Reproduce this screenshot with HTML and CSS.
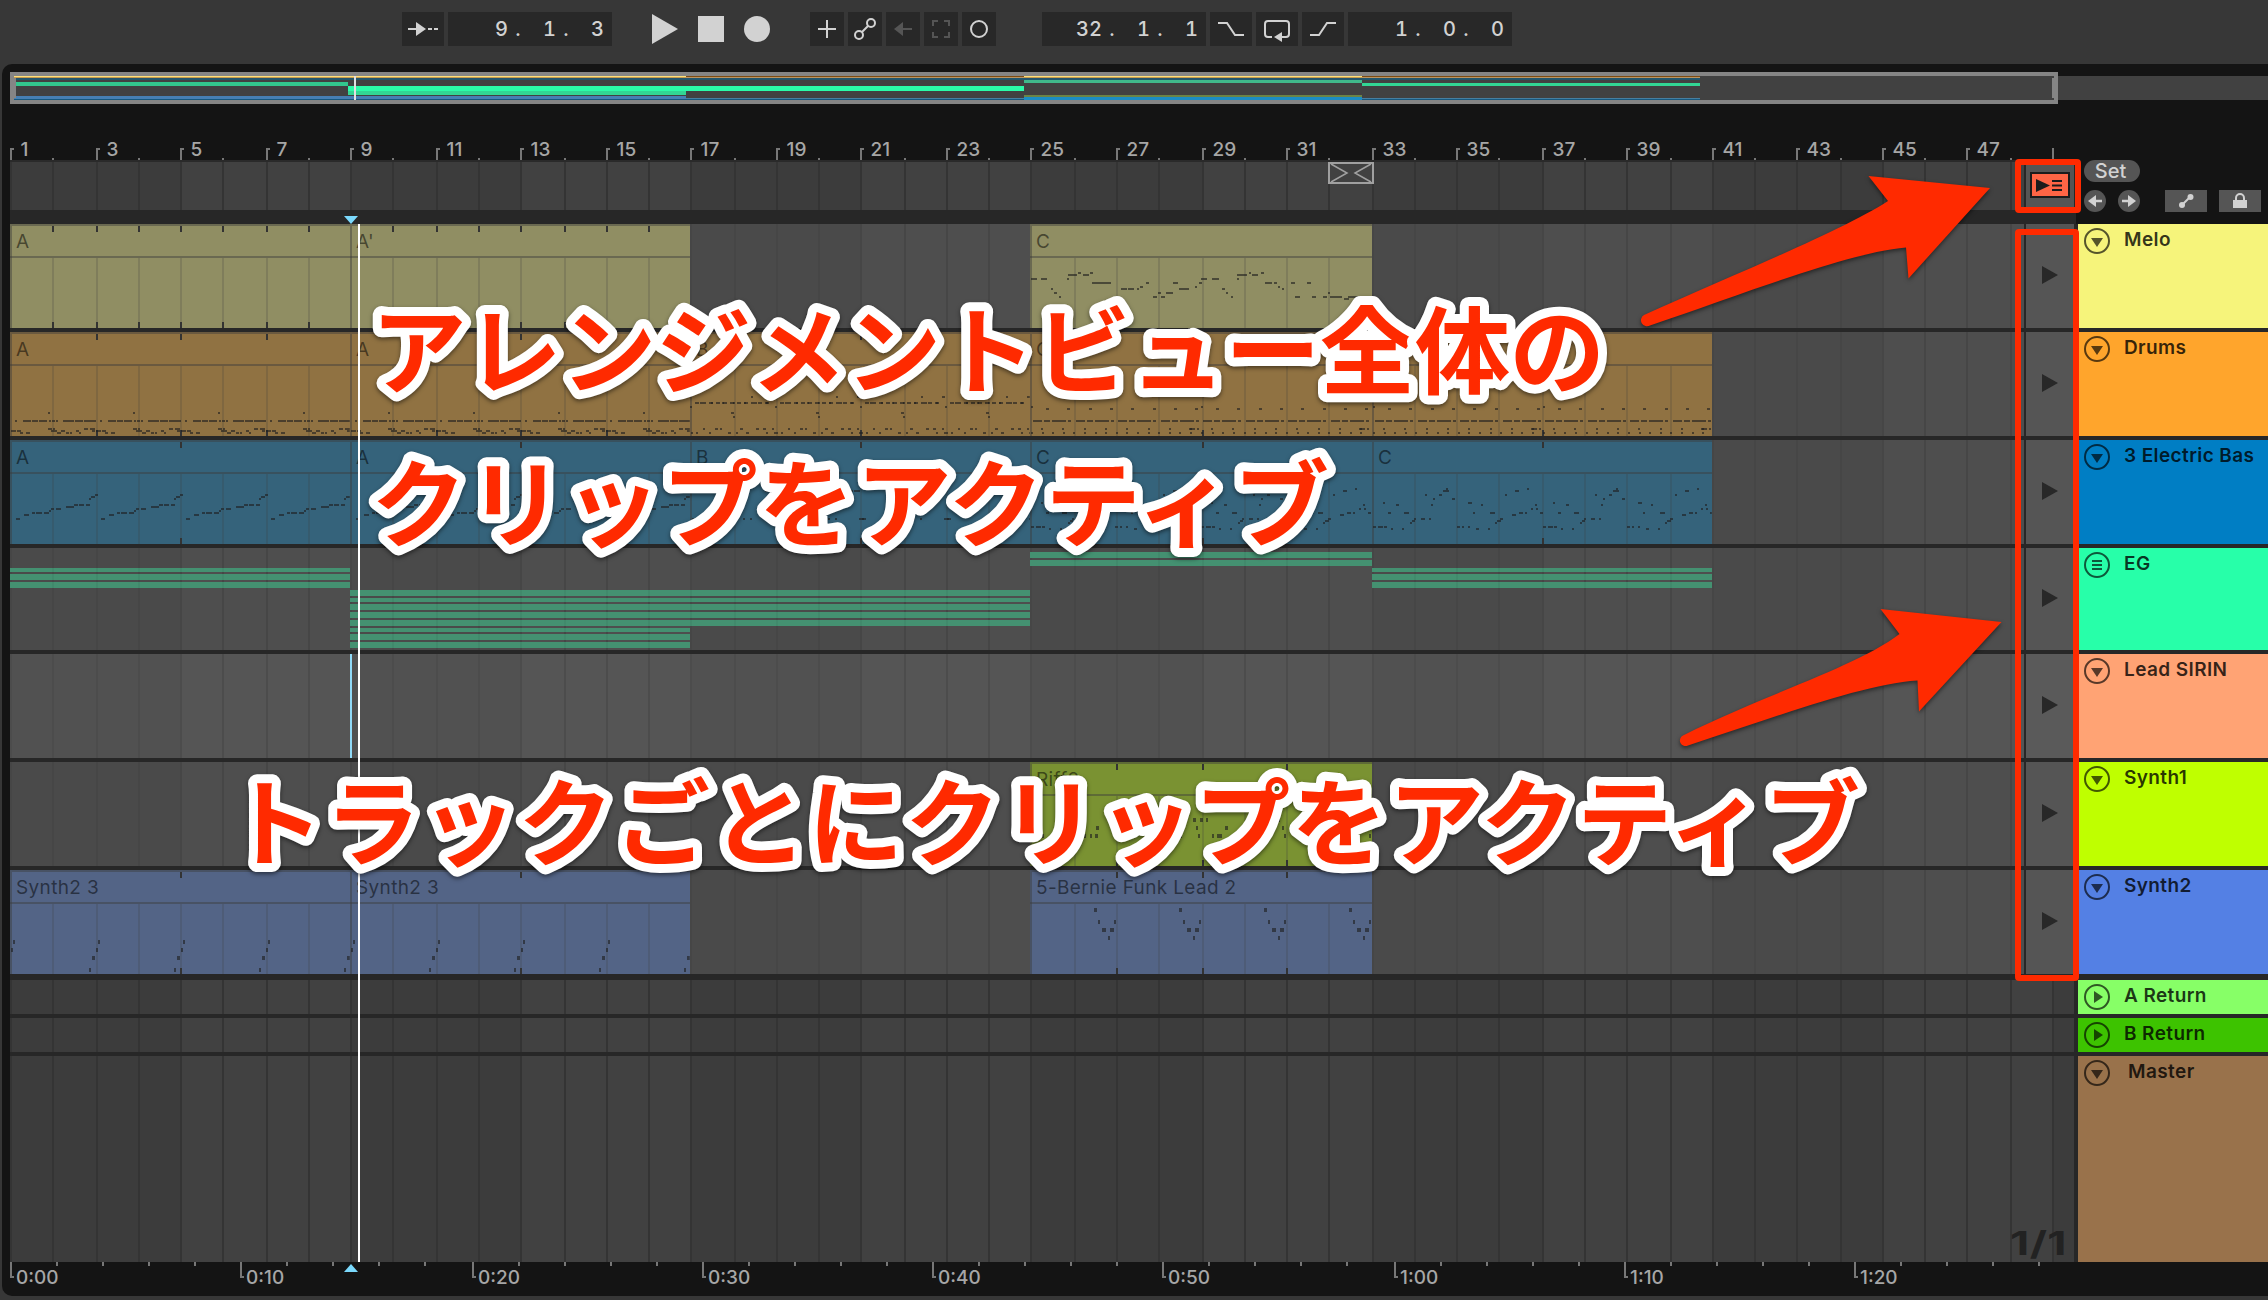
FILE: index.html
```html
<!DOCTYPE html>
<html lang="ja">
<head>
    <meta charset="UTF-8" />
    <title>Arrangement</title>
    <link rel="stylesheet" href="styles.css">
</head>
<body>
<header class="transport">
    <div class="box btn">
        <svg width="42" height="34"><path d="M6 17h9M26 17h4M32 17h4" stroke="#d2d2d2" stroke-width="2"/><path d="M14 10l10 7-10 7z" fill="#d2d2d2"/></svg>
    </div>
    <div class="box field"><b>9</b><i>.</i><b>1</b><i>.</i><b>3</b></div>
    <div class="play-group">
        <svg width="26" height="30"><path d="M0 0l26 15L0 30z" fill="#d2d2d2"/></svg>
        <div class="stop"></div>
        <div class="record"></div>
    </div>
    <div class="box tool"><svg width="34" height="34"><path d="M8 17h18M17 8v18" stroke="#d2d2d2" stroke-width="2"/></svg></div>
    <div class="box tool"><svg width="34" height="34" fill="none" stroke="#d2d2d2" stroke-width="2"><circle cx="11" cy="23" r="4"/><circle cx="23" cy="11" r="4"/><path d="M14 20l6-6"/></svg></div>
    <div class="box tool"><svg width="34" height="34"><path d="M15 17h11" stroke="#555" stroke-width="2"/><path d="M17 10v14l-9-7z" fill="#555"/></svg></div>
    <div class="box tool"><svg width="34" height="34"><path d="M9 14V9h5M20 9h5v5M25 20v5h-5M14 25H9v-5" fill="none" stroke="#555" stroke-width="2"/></svg></div>
    <div class="box tool"><svg width="34" height="34"><circle cx="17" cy="17" r="8" fill="none" stroke="#d2d2d2" stroke-width="2"/></svg></div>
    <div class="box field loop-start"><b>32</b><i>.</i><b>1</b><i>.</i><b>1</b></div>
    <div class="box btn"><svg width="42" height="34"><path d="M8 11h9l8 12h9" fill="none" stroke="#d2d2d2" stroke-width="2"/></svg></div>
    <div class="box btn"><svg width="42" height="34"><path d="M16 25h-4a3 3 0 0 1-3-3V12a3 3 0 0 1 3-3h18a3 3 0 0 1 3 3v10a3 3 0 0 1-3 3h-5" fill="none" stroke="#d2d2d2" stroke-width="2"/><path d="M26 20v10l-8-5z" fill="#d2d2d2"/></svg></div>
    <div class="box btn"><svg width="42" height="34"><path d="M8 23h9l8-12h9" fill="none" stroke="#d2d2d2" stroke-width="2"/></svg></div>
    <div class="box field"><b>1</b><i>.</i><b>0</b><i>.</i><b>0</b></div>
</header>

<main class="arranger">
    <div class="overview"><svg id="overview" width="2258" height="32"></svg></div>
    <svg id="ruler" class="ruler" width="2064" height="56"></svg>

    <div class="scrub-row">
        <div class="scrub">
            <svg id="scrub" width="2014" height="48"></svg>
            <div class="back-cell">
                <div class="back-btn"><svg width="36" height="22"><path d="M4 5l14 6.500-14 6.500z" fill="#1c1c1c"/><path d="M20 7h10M20 11.500h10M20 16h10" stroke="#1c1c1c" stroke-width="2"/></svg></div>
            </div>
        </div>
        <div class="set-tools">
            <div class="set">Set</div>
            <div class="set-buttons">
                <svg width="22" height="22"><circle cx="11" cy="11" r="11" fill="#555"/><path d="M10 11h8" stroke="#d2d2d2" stroke-width="2.500"/><path d="M12 5v12l-8-6z" fill="#d2d2d2"/></svg>
                <svg width="22" height="22"><circle cx="11" cy="11" r="11" fill="#555"/><path d="M4 11h8" stroke="#d2d2d2" stroke-width="2.500"/><path d="M10 5v12l8-6z" fill="#d2d2d2"/></svg>
                <div class="small-btn auto"><svg width="42" height="22"><path d="M17 15l8-8" stroke="#d2d2d2" stroke-width="2"/><circle cx="17" cy="15" r="3" fill="#d2d2d2"/><circle cx="25.500" cy="7" r="3" fill="#d2d2d2"/></svg></div>
                <div class="small-btn"><svg width="42" height="22"><path d="M14 10h14v8H14z" fill="#d2d2d2"/><path d="M17 10V8a4 4 0 0 1 8 0v2" fill="none" stroke="#d2d2d2" stroke-width="2"/></svg></div>
            </div>
        </div>
    </div>

    <div id="tracks" class="tracks"></div>
    <svg id="time" class="time" width="2064" height="34"></svg>
</main>

<div class="marker top"></div>
<div class="marker bottom"></div>
<div class="playhead"></div>

<svg class="notes-layer" width="2268" height="1300">
    <g class="shape">
        <path d="M1644 315C1730 276 1840 232 1888 201L1868.500 176 1990 188 1908.500 278.500 1906 247.500C1850 252 1740 295 1650 325.500A5.500 5.500 0 0 1 1644 315z"/>
        <path d="M1683 735.500C1766 694 1856 667 1899.500 634L1880.500 609 2001.500 622 1919 711.500 1917.500 680.500C1862 684 1770 719 1688 745.500A5.500 5.500 0 0 1 1683 735.500z"/>
    </g>
    <g class="frame">
        <rect x="2018" y="162" width="60" height="48" rx="1"/>
        <rect x="2018" y="232" width="58" height="746" rx="1"/>
    </g>
    <g class="caption">
        <text x="371" y="387" textLength="1234">アレンジメントビュー全体の</text>
        <text x="371" y="540" textLength="958">クリップをアクティブ</text>
        <text x="228" y="859" textLength="1632">トラックごとにクリップをアクティブ</text>
    </g>
</svg>
<script src="script.js"></script>
</body>
</html>
```
FILE: styles.css
```css
* {
    box-sizing: border-box;
}

body {
    margin: 0;
    width: 2268px;
    height: 1300px;
    overflow: hidden;
    position: relative;
    background: #373737;
    color: #d2d2d2;
    font-family: Inter, "Noto Sans CJK JP", sans-serif;
    font-size: 19px;
}

svg {
    display: block;
}

/* transport bar */
.transport {
    height: 64px;
    padding: 12px 0 0 402px;
    display: flex;
    gap: 4px;
}

.box {
    height: 34px;
    background: #282828;
}

.btn {
    width: 42px;
}

.tool {
    width: 34px;
}

.field {
    width: 164px;
    padding-right: 8px;
    display: flex;
    justify-content: flex-end;
    align-items: center;
    font-size: 20px;
    font-weight: 500;
    font-variant-numeric: tabular-nums;
}

.field b {
    width: 28px;
    text-align: right;
    font-weight: 500;
}

.field i {
    width: 20px;
    text-align: center;
    font-style: normal;
}

.loop-start {
    margin-left: 42px;
}

.play-group {
    display: flex;
    align-items: center;
    gap: 20px;
    height: 34px;
    margin: 0 36px;
}

.stop,
.record {
    width: 26px;
    height: 26px;
    background: #d2d2d2;
}

.record {
    border-radius: 50%;
}

/* arrangement */
.arranger {
    height: 1232px;
    margin-left: 2px;
    padding: 8px 0 0 8px;
    background: #141414;
    border-radius: 10px 0 0 10px;
}

.ruler,
.time {
    overflow: visible;
}

.ruler text,
.time text {
    fill: #a6a6a6;
    font-size: 19px;
    font-weight: 500;
}

.scrub-row {
    display: flex;
    height: 64px;
}

.scrub {
    width: 2066px;
    border-top: 2px solid #2a2a2a;
    border-bottom: 14px solid #272727;
    background: #272727;
    display: flex;
}

.back-cell {
    width: 50px;
    border-left: 2px solid #272727;
    background: #555;
    padding: 10px 4px;
}

.back-btn {
    width: 40px;
    height: 26px;
    border: 2px solid #1c1c1c;
    background: #ff6545;
}

.set-tools {
    padding-left: 8px;
}

.set {
    width: 56px;
    height: 22px;
    padding-right: 3px;
    border-radius: 11px;
    background: #555;
    font-size: 20px;
    font-weight: 500;
    line-height: 23px;
    text-align: center;
}

.set-buttons {
    display: flex;
    align-items: center;
    gap: 12px;
    margin-top: 8px;
}

.small-btn {
    width: 42px;
    height: 22px;
    background: #555;
}

.small-btn.auto {
    margin-left: 13px;
}

.tracks {
    background: #272727;
    display: flex;
    flex-direction: column;
    gap: 4px;
    height: 1038px;
}

.track {
    display: flex;
}

.track.after-gap {
    margin-top: 2px;
}

.launch {
    width: 50px;
    border-left: 2px solid #272727;
    background: #555;
    display: flex;
    align-items: center;
    padding: 0 0 2px 16px;
}

.launch.selected {
    background: #5a5a5a;
}

.head {
    flex: 1;
    margin-left: 4px;
    padding: 4px 0 0 6px;
    display: flex;
    align-items: flex-start;
    color: rgba(0, 0, 0, 0.8);
    font-weight: 600;
    letter-spacing: 0.4px;
    white-space: nowrap;
    overflow: hidden;
}

.name {
    margin: 2px 0 0 14px;
    line-height: 20px;
}

.head.master .name {
    margin-left: 18px;
}

.lane text {
    font-size: 19px;
    letter-spacing: 0.35px;
    fill: #000;
    fill-opacity: 0.52;
}

.lane .position {
    font-size: 33px;
    font-weight: 700;
    fill: #222;
    fill-opacity: 1;
}

.marker {
    position: absolute;
    left: 344px;
    width: 14px;
    height: 8px;
    background: #7bd9fc;
}

.marker.top {
    top: 216px;
    clip-path: polygon(0 0, 100% 0, 50% 100%);
}

.marker.bottom {
    top: 1264px;
    clip-path: polygon(50% 0, 100% 100%, 0 100%);
}

.playhead {
    position: absolute;
    left: 358px;
    top: 224px;
    width: 2px;
    height: 1038px;
    background: #fff;
}

/* red annotations over the window */
.notes-layer {
    position: absolute;
    left: 0;
    top: 0;
}

.shape {
    fill: #ff2a00;
    filter: drop-shadow(0 2px 2px rgba(0, 0, 0, 0.5));
}

.frame rect {
    fill: none;
    stroke: #ff2a00;
    stroke-width: 6;
}

.caption text {
    font-family: "Noto Sans CJK JP", sans-serif;
    font-size: 95.5px;
    font-weight: 700;
    fill: #ff2a00;
    stroke: #fff;
    stroke-width: 18px;
    stroke-linejoin: round;
    paint-order: stroke;
}

.caption {
    filter: drop-shadow(0 2px 2px rgba(0, 0, 0, 0.5));
}
```
FILE: script.js
```js
// x of a bar line inside a lane, snapped to 2px
function barX(bar) {
    return 2 * Math.round((bar - 1) * 21.27);
}

function rect(x, y, w, h, fill) {
    return `<rect x="${x}" y="${y}" width="${w}" height="${h}" fill="${fill}"/>`;
}

function grid(width, height, dark, light, line) {
    let s = "";
    for (let b = 1; b < 50; b += 4) {
        s += rect(barX(b), 0, barX(b + 4) - barX(b), height, (b - 1) % 8 ? light : dark);
    }
    for (let b = 1; b < 50; b++) s += rect(barX(b), 0, 2, height, line);
    return s;
}

// rows: { y: [[x, width], ...] }, repeated every `period` px
function notes(clip, rows, period, h = 2) {
    const left = barX(clip.from), right = barX(clip.to);
    let s = "";
    for (let off = left; off < right - 2; off += period) {
        for (const y in rows) {
            for (const [x, w] of rows[y]) {
                if (off + x < right) s += rect(Math.round(off + x), y, Math.min(w, right - off - x), h, "rgba(30,30,30,.62)");
            }
        }
    }
    return s;
}

const every = (step, start, end, w) => {
    const out = [];
    for (let x = start; x < end; x += step) out.push([x, w]);
    return out;
};

const drumsA = {
    80: [[38, 2]],
    88: [[5, 2], [13, 8], [22, 6], [29, 8], [39, 2], [42, 3], [46, 2], [53, 11], [65, 8], [74, 12]],
    96: [[38, 4], [43, 2], [74, 4], [80, 5]],
    98: [[1, 5], [7, 4], [41, 6], [51, 4], [66, 3], [82, 3]],
    100: [[10, 3], [16, 4], [47, 4], [56, 3], [60, 2], [69, 2]]
};
const drumsB = {
    64: [[61, 2], [82, 3]],
    70: [...every(7, 5, 82, 4), ...every(11, 10, 80, 2)],
    74: [[0, 2]],
    80: [[41, 3]],
    84: [[43, 2]],
    96: [[13, 2], [25, 3], [30, 2], [50, 3], [66, 3], [73, 3], [82, 2]],
    100: [[1, 2], [6, 2], [19, 2], [38, 3], [46, 2], [56, 3], [76, 2], [84, 2]]
};
const drumsC = {
    74: [[1, 2]],
    76: every(21.3, 16, 170, 3),
    88: [...every(42.5, 3, 168, 9), ...every(42.5, 14, 168, 6), ...every(42.5, 22, 168, 14), ...every(42.5, 38, 168, 3)],
    96: [...every(21.3, 11, 170, 2), [159, 6], [167, 2]],
    100: every(10.6, 1, 170, 2)
};
const bassA = {
    78: [[6, 4]], 74: [[14, 5]], 72: [[22, 3], [26, 6], [34, 5]], 70: [[39, 2]],
    68: [[41, 3], [46, 5]], 66: [[56, 8]], 64: [[64, 4], [69, 5], [76, 4]],
    58: [[79, 2]], 56: [[81, 4]], 54: [[85, 3]]
};
const bassB = { 78: [[2, 2], [53, 2], [60, 2], [84, 7]], 50: [[75, 3], [79, 6]], 60: [[30, 4], [36, 3]] };
const bassC = {
    86: [[1, 3], [6, 5], [12, 3], [85, 3], [90, 2], [96, 2]],
    88: [[19, 2], [30, 2], [104, 3], [116, 2]],
    82: [[38, 2], [123, 2]], 80: [[40, 3], [125, 4]],
    78: [[42, 2], [49, 4], [57, 2], [128, 3]],
    74: [[140, 4]],
    72: [[16, 3], [32, 5], [101, 2], [118, 5], [147, 4], [153, 2], [168, 3]],
    68: [[159, 2], [164, 2]],
    64: [[24, 3], [59, 2], [109, 2], [163, 2]],
    62: [[11, 2], [96, 4]], 58: [[61, 2], [80, 3]],
    54: [[53, 2], [67, 3], [133, 2]], 50: [[71, 6], [143, 4]], 48: [[74, 2], [155, 2]]
};
const meloC = {
    48: [[48, 3], [60, 3], [219, 2], [231, 3]],
    50: [[38, 9], [53, 6], [207, 10], [222, 6]],
    54: [[1, 6], [11, 6], [37, 2], [171, 6], [182, 7], [207, 2]],
    58: [[62, 19], [116, 3], [143, 5], [169, 3], [235, 7], [244, 3], [261, 4], [277, 4]],
    62: [[110, 3], [165, 2], [248, 2]],
    64: [[21, 2], [91, 6], [98, 6], [107, 2], [149, 10], [192, 3], [252, 2]],
    68: [[24, 3], [128, 3], [136, 7], [196, 2], [298, 2]],
    72: [[29, 2], [123, 4], [131, 4], [201, 2], [265, 5], [282, 4], [293, 4], [300, 12], [318, 10]],
    74: [[314, 5]]
};
const synthA = { 70: [[3, 2]], 78: [[1, 2]], 86: [[82, 3]], 98: [[79, 2]] };
const synthC = { 38: [[64, 3]], 50: [[68, 2], [84, 2]], 58: [[72, 4], [80, 4]], 66: [[78, 2]] };
const riff = {
    44: [[158, 2]],
    56: [[163, 3], [170, 3], [176, 2], [248, 2]],
    64: [[66, 3], [151, 2], [166, 2], [195, 3], [252, 2]],
    72: [[12, 2], [54, 2], [60, 2], [65, 3], [102, 2], [145, 2], [150, 2], [168, 2], [182, 2], [187, 5], [236, 2], [254, 2], [339, 2]]
};

const PLAY = `<svg width="16" height="18"><path d="M0 0l16 9-16 9z" fill="#282828"/></svg>`;

const tracks = [
    { name: "Melo", h: 104, color: "#f6f47b", clip: "#908e63", clips: [
        { from: 1, to: 9, label: "A", ticks: 1 },
        { from: 9, to: 17, label: "A'", ticks: 1 },
        { from: 25, to: 33, label: "C", rows: meloC, period: 340 }] },
    { name: "Drums", h: 104, color: "#ffa52c", clip: "#907242", clips: [
        { from: 1, to: 9, label: "A", ticks: 2, rows: drumsA, period: 85.08 },
        { from: 9, to: 17, label: "A", ticks: 2, rows: drumsA, period: 85.08 },
        { from: 17, to: 25, label: "B", ticks: 4, rows: drumsB, period: 85.08 },
        { from: 25, to: 33, label: "C", ticks: 4, rows: drumsC, period: 170.16 },
        { from: 33, to: 41, label: "C", ticks: 4, rows: drumsC, period: 170.16 }] },
    { name: "3 Electric Bas", h: 104, color: "#007ec4", clip: "#35637b", clips: [
        { from: 1, to: 9, label: "A", ticks: 4, rows: bassA, period: 85.08 },
        { from: 9, to: 17, label: "A", ticks: 4, rows: bassA, period: 85.08 },
        { from: 17, to: 25, label: "B", ticks: 4, rows: bassB, period: 85.08 },
        { from: 25, to: 33, label: "C", ticks: 4, rows: bassC, period: 170.16 },
        { from: 33, to: 41, label: "C", ticks: 4, rows: bassC, period: 170.16 }] },
    { name: "EG", h: 102, color: "#27ffa9", icon: "group", bars: [
        [1, 9, 20, 4], [1, 9, 26, 6], [1, 9, 34, 6],
        [9, 25, 42, 6], [9, 25, 50, 4], [9, 25, 56, 6], [9, 25, 64, 6], [9, 25, 72, 6],
        [9, 17, 80, 4], [9, 17, 86, 6], [9, 17, 94, 6],
        [25, 33, 4, 6], [25, 33, 12, 6],
        [33, 41, 20, 4], [33, 41, 26, 6], [33, 41, 34, 6]] },
    { name: "Lead SIRIN", h: 104, color: "#ffa374", selected: true },
    { name: "Synth1", h: 104, color: "#bfff00", clip: "#7a9232", clips: [
        { from: 25, to: 33, label: "Riff2", ticks: 2, rows: riff, period: 400, tall: true }] },
    { name: "Synth2", h: 104, color: "#5480e4", clip: "#536486", clips: [
        { from: 1, to: 9, label: "Synth2 3", ticks: 4, rows: synthA, period: 85.08, tall: true },
        { from: 9, to: 17, label: "Synth2 3", ticks: 4, rows: synthA, period: 85.08, tall: true },
        { from: 25, to: 33, label: "5-Bernie Funk Lead 2", ticks: 2, rows: synthC, period: 85.08, tall: true }] },
    { name: "A Return", h: 34, color: "#87ff67", icon: "closed", bus: true, gap: true },
    { name: "B Return", h: 34, color: "#3dc300", icon: "closed", bus: true },
    { name: "Master", h: 206, color: "#99724b", bus: true, master: true }
];

function drawClip(t, c) {
    const x = barX(c.from), w = barX(c.to) - x;
    const edge = "rgba(60,60,60,.45)";
    let s = rect(x, 0, w, t.h, t.clip) + rect(x, 0, w, 2, edge) + rect(x, 32, w, 2, edge) + rect(x, 2, 2, t.h - 2, edge);
    for (let b = c.from + 1; b < c.to; b++) {
        s += rect(barX(b), 34, 2, t.h - 34, "rgba(60,60,60,.2)");
        if (c.ticks && (b - c.from) % c.ticks === 0) {
            s += rect(barX(b), 2, 2, 6, "#333") + rect(barX(b), t.h - 6, 2, 6, "#333");
        }
    }
    if (c.rows) s += notes(c, c.rows, c.period, c.tall ? 4 : 2);
    return s + `<text x="${x + 6}" y="24">${c.label}</text>`;
}

function foldIcon(kind) {
    let mark = `<path d="M7 10h12l-6 9z" fill="#000"/>`;
    if (kind === "closed") mark = `<path d="M10 7v12l9-6z" fill="#000"/>`;
    if (kind === "group") mark = `<path d="M8 9h10M8 13h10M8 17h10" stroke="#000" stroke-width="2"/>`;
    return `<svg width="26" height="26" opacity=".65"><circle cx="13" cy="13" r="12" fill="none" stroke="#000" stroke-width="2"/>${mark}</svg>`;
}

document.getElementById("tracks").innerHTML = tracks.map(t => {
    const w = t.bus ? 2064 : 2014;
    let s;
    if (t.bus) s = grid(w, t.h, "#3c3c3c", "#414141", "#343434");
    else if (t.selected) s = grid(w, t.h, "#515151", "#555", "#4c4c4c");
    else s = grid(w, t.h, "#4a4a4a", "#4e4e4e", "#464646");
    (t.clips || []).forEach(c => s += drawClip(t, c));
    (t.bars || []).forEach(([a, b, y, h]) => {
        s += rect(barX(a), y, barX(b) - barX(a), h, "#449171");
        for (let i = a + 1; i < b; i++) s += rect(barX(i), y, 2, h, "#418a6c");
    });
    if (t.selected) s += rect(barX(9), 0, 2, t.h, "#90daf8");
    if (t.master) s += `<text class="position" x="2000" y="199" textLength="57" lengthAdjust="spacingAndGlyphs">1/1</text>`;
    const launch = t.bus ? "" : `<div class="launch${t.selected ? " selected" : ""}">${PLAY}</div>`;
    return `<div class="track${t.gap ? " after-gap" : ""}">
        <svg class="lane" width="${w}" height="${t.h}">${s}</svg>${launch}
        <div class="head${t.master ? " master" : ""}" style="background:${t.color}">${foldIcon(t.icon)}<span class="name">${t.name}</span></div>
    </div>`;
}).join("");

// bar ruler
let ruler = "";
for (let b = 1; b < 50; b++) {
    const x = barX(b);
    if (b % 2) {
        ruler += rect(x, 44, 2, 12, "#777");
        if (b < 49) ruler += rect(x, 44, 4, 2, "#777") + `<text x="${x + 10.5}" y="52">${b}</text>`;
    } else {
        ruler += rect(x, 54, 2, 2, "#777");
    }
}
document.getElementById("ruler").innerHTML = ruler;

document.getElementById("scrub").innerHTML = grid(2014, 48, "#3c3c3c", "#414141", "#343434")
    + `<g fill="none" stroke="#a0a0a0" stroke-width="2"><rect x="1319" y="1" width="44" height="20"/><path d="M1321 2l16 9-16 9M1361 2l-16 9 16 9" stroke-width="1.500"/></g>`;

// time ruler, one small tick every two seconds
let time = "";
for (let i = 0; i < 45; i++) {
    const x = 2 * Math.round(i * 23.05);
    if (i % 5) {
        time += rect(x, 0, 2, 4, "#777");
    } else {
        const sec = i * 2;
        time += rect(x, 0, 2, 16, "#777") + rect(x, 14, 4, 2, "#777");
        time += `<text x="${x + 6}" y="22">${Math.floor(sec / 60)}:${String(sec % 60).padStart(2, "0")}</text>`;
    }
}
document.getElementById("time").innerHTML = time;

// overview strip
const ox = bar => Math.round((bar - 1) * 42.25);
const part = (a, b, y, h, fill) => rect(ox(a), y, ox(b) - ox(a), h, fill);
document.getElementById("overview").innerHTML = rect(0, 4, 2258, 24, "#414141")
    + part(1, 17, 4, 1, "#fce07a") + part(1, 17, 5, 1, "#c89b4e") + part(17, 25, 4, 1, "#7c4b12") + part(17, 25, 5, 1, "#bb9562")
    + part(25, 33, 4, 1, "#fce07a") + part(25, 33, 5, 1, "#c89b4e") + part(33, 41, 4, 1, "#7c4b12") + part(33, 41, 5, 1, "#bb9562")
    + part(1, 41, 6, 2, "#23566c")
    + part(1, 9, 10, 4, "#32c78d") + part(9, 17, 14, 5, "#2bfba8") + part(9, 17, 19, 4, "#32d694")
    + part(17, 25, 14, 5, "#2bfba8") + part(25, 33, 8, 3, "#40b98b") + part(33, 41, 11, 3, "#32d694")
    + part(1, 17, 24, 4, "#467fb3") + part(1, 41, 27, 1, "#17587e")
    + part(17, 25, 26, 1, "#467fa0") + part(25, 33, 23, 2, "#6b8446") + part(25, 33, 25, 3, "#1b8dc5") + part(33, 41, 26, 1, "#467fa0")
    + `<path d="M0 0H2048V32H0zM4 4V28H2044V4z" fill="#858585" fill-rule="evenodd"/>`
    + rect(4, 6, 2, 20, "#858585") + rect(2042, 6, 4, 20, "#858585") + rect(344, 4, 2, 24, "#e0e0e0");
```
